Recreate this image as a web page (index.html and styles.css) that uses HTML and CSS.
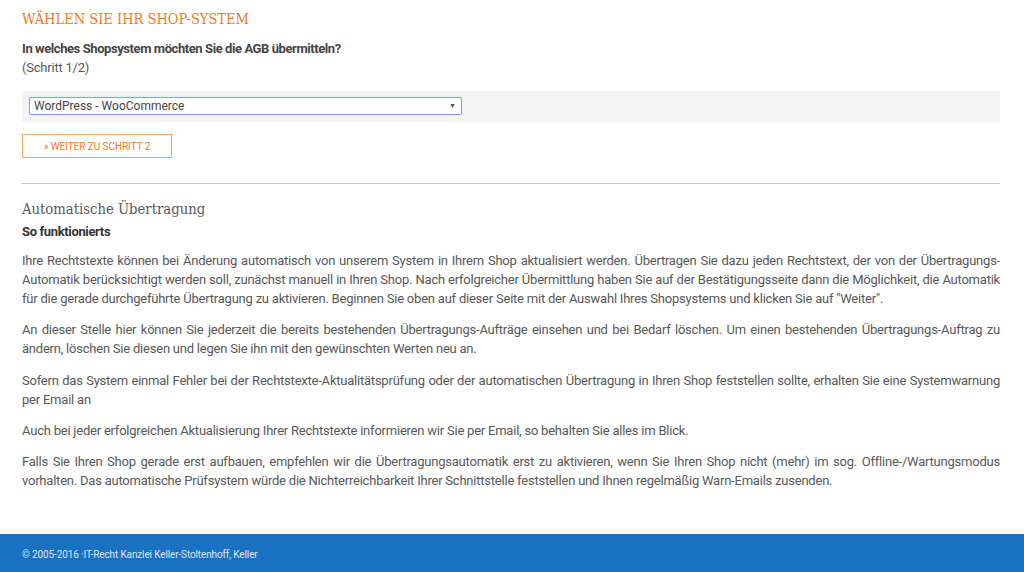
FILE: index.html
```html
<!DOCTYPE html>
<html lang="de">
<head>
<meta charset="utf-8">
<title>Shop-System wählen</title>
<link rel="stylesheet" href="styles.css">
</head>
<body>
<main class="page">
  <h1 class="title">WÄHLEN SIE IHR SHOP-SYSTEM</h1>
  <p class="question"><strong>In welches Shopsystem möchten Sie die AGB übermitteln?</strong><br>(Schritt 1/2)</p>
  <div class="select-box">
    <div class="select-wrap">
      <select class="select">
        <option>WordPress - WooCommerce</option>
      </select>
      <span class="select-arrow">▼</span>
    </div>
  </div>
  <button class="btn" type="button">» WEITER ZU SCHRITT 2</button>
  <hr class="rule">
  <h2 class="subtitle">Automatische Übertragung</h2>
  <p class="lead"><strong>So funktionierts</strong></p>
  <p class="text">Ihre Rechtstexte können bei Änderung automatisch von unserem System in Ihrem Shop aktualisiert werden. Übertragen Sie dazu jeden Rechtstext, der von der Übertragungs-Automatik berücksichtigt werden soll, zunächst manuell in Ihren Shop. Nach erfolgreicher Übermittlung haben Sie auf der Bestätigungsseite dann die Möglichkeit, die Automatik für die gerade durchgeführte Übertragung zu aktivieren. Beginnen Sie oben auf dieser Seite mit der Auswahl Ihres Shopsystems und klicken Sie auf "Weiter".</p>
  <p class="text">An dieser Stelle hier können Sie jederzeit die bereits bestehenden Übertragungs-Aufträge einsehen und bei Bedarf löschen. Um einen bestehenden Übertragungs-Auftrag zu ändern, löschen Sie diesen und legen Sie ihn mit den gewünschten Werten neu an.</p>
  <p class="text">Sofern das System einmal Fehler bei der Rechtstexte-Aktualitätsprüfung oder der automatischen Übertragung in Ihren Shop feststellen sollte, erhalten Sie eine Systemwarnung per Email an</p>
  <p class="text">Auch bei jeder erfolgreichen Aktualisierung Ihrer Rechtstexte informieren wir Sie per Email, so behalten Sie alles im Blick.</p>
  <p class="text">Falls Sie Ihren Shop gerade erst aufbauen, empfehlen wir die Übertragungsautomatik erst zu aktivieren, wenn Sie Ihren Shop nicht (mehr) im sog. Offline-/Wartungsmodus vorhalten. Das automatische Prüfsystem würde die Nichterreichbarkeit Ihrer Schnittstelle feststellen und Ihnen regelmäßig Warn-Emails zusenden.</p>
</main>
<footer class="footer">© 2005-2016 ·IT-Recht Kanzlei Keller-Stoltenhoff, Keller</footer>
</body>
</html>
```
FILE: styles.css
```css
html, body {
  margin: 0;
  padding: 0;
  background: #fff;
}
body {
  font-family: Roboto, Lato, sans-serif;
  font-size: 13px;
  line-height: 19px;
  letter-spacing: -0.22px;
  color: #585858;
}
.page {
  padding: 9px 24px 44px 22px;
}
.title {
  margin: 0;
  font-family: "DejaVu Serif", "Liberation Serif", serif;
  font-stretch: condensed;
  font-weight: normal;
  font-size: 14.5px;
  line-height: 20px;
  letter-spacing: 0;
  color: #ef7a26;
}
.question {
  margin: 10px 0 0;
}
.question strong {
  color: #454545;
  letter-spacing: -0.42px;
}
.select-box {
  margin-top: 14px;
  background: #f4f4f4;
  padding: 6px 7px 7px;
}
.select-wrap {
  position: relative;
  width: 433px;
}
.select {
  display: block;
  width: 433px;
  height: 18px;
  margin: 0;
  padding: 0 0 0 4px;
  border: 1px solid #7aa6e4;
  border-radius: 2px;
  box-shadow: 0 0 1px #9dbff0;
  background: #fff;
  font-family: Roboto, Lato, sans-serif;
  font-size: 12px;
  letter-spacing: 0;
  color: #444;
  appearance: none;
  -webkit-appearance: none;
  outline: none;
}
.select-arrow {
  position: absolute;
  right: 6px;
  top: 5px;
  font-size: 7px;
  line-height: 8px;
  letter-spacing: 0;
  color: #555;
  pointer-events: none;
}
.btn {
  display: block;
  margin-top: 12px;
  width: 150px;
  height: 24px;
  padding: 0;
  border: 1px solid #f5a560;
  background: #fff;
  color: #ee7a2a;
  font-family: Roboto, Lato, sans-serif;
  font-size: 10px;
  letter-spacing: -0.05px;
  cursor: pointer;
}
.rule {
  margin: 25px 0 0;
  border: 0;
  border-top: 1px solid #c6c6c6;
  height: 0;
}
.subtitle {
  margin: 14px 0 0;
  font-family: "DejaVu Serif", "Liberation Serif", serif;
  font-stretch: condensed;
  font-weight: normal;
  font-size: 14.7px;
  line-height: 22px;
  letter-spacing: 0;
  color: #595959;
}
.lead {
  margin: 2px 0 0;
}
.lead strong {
  color: #333;
  letter-spacing: -0.35px;
}
.text {
  margin: 10px 0 0;
  text-align: justify;
}
.text + .text {
  margin-top: 12.3px;
}
.footer {
  background: #1a70c1;
  color: #dfe6ef;
  font-family: Roboto, Lato, sans-serif;
  font-size: 10px;
  letter-spacing: -0.13px;
  line-height: 35px;
  height: 35px;
  padding: 3px 0 0 22px;
}
```
